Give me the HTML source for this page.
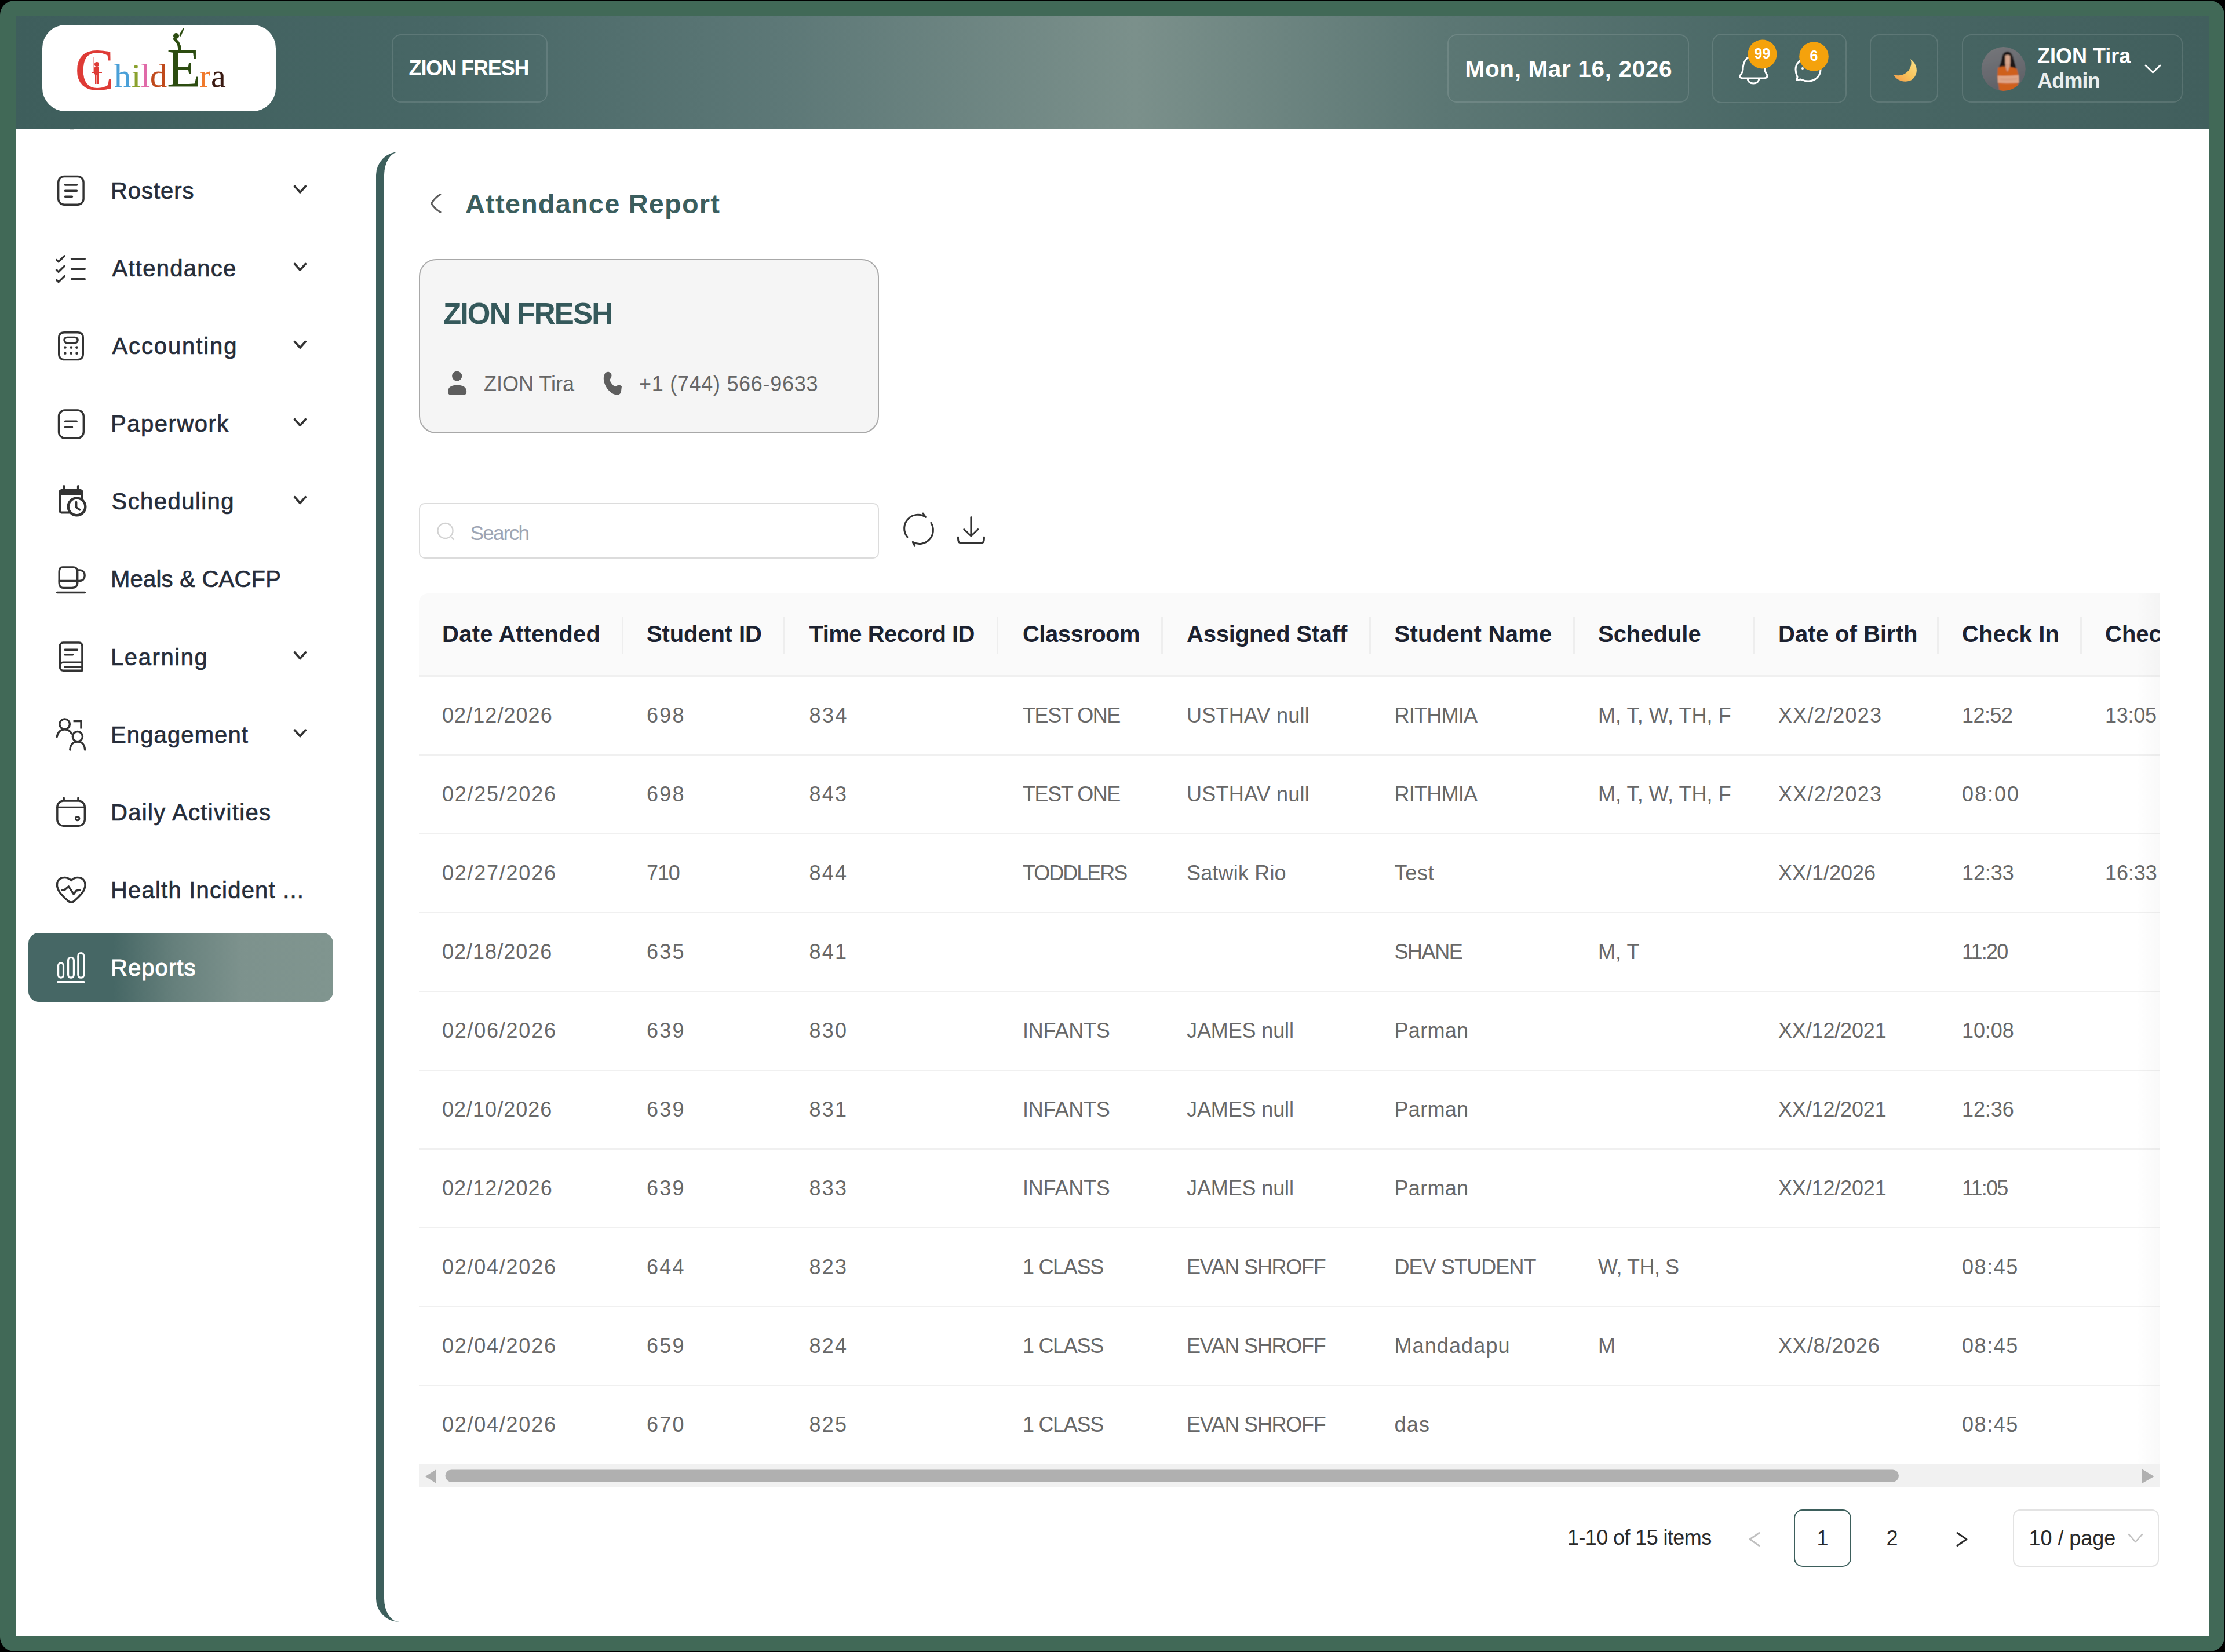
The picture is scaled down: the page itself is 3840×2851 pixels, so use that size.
<!DOCTYPE html><html><head><meta charset="utf-8"><title>Attendance Report</title><style>
html,body{margin:0;padding:0;}body{width:3840px;height:2851px;position:relative;overflow:hidden;background:#000;font-family:"Liberation Sans", sans-serif;}
div{box-sizing:border-box;}svg{position:absolute;overflow:visible;}
</style></head><body>
<div style="position:absolute;left:0px;top:1px;width:3839px;height:2849px;box-sizing:border-box;background:#416957;border-radius:25px;"></div>
<div style="position:absolute;left:28px;top:28px;width:3784px;height:2795px;box-sizing:border-box;background:#fff;"></div>
<div style="position:absolute;left:28px;top:28px;width:3784px;height:194px;box-sizing:border-box;background:linear-gradient(90deg,#3e5e5c 0%,#486766 20%,#5d7877 35%,#7b908b 51%,#5c7774 65%,#4a6866 80%,#415f5d 100%);"></div>
<div style="position:absolute;left:73px;top:43px;width:403px;height:149px;box-sizing:border-box;background:#fff;border-radius:40px;"></div>
<div style="position:absolute;left:130px;top:0;height:0;font-family:'Liberation Serif',serif;">
<div style="position:absolute;left:-1px;top:120.7px;font-size:102px;line-height:0;color:#de3b36;white-space:pre;-webkit-text-stroke:0.2px #de3b36;">C</div>
<div style="position:absolute;left:67px;top:130.9px;font-size:58px;line-height:0;color:#4aa0d8;white-space:pre;-webkit-text-stroke:0.2px #4aa0d8;">h</div>
<div style="position:absolute;left:97px;top:130.9px;font-size:58px;line-height:0;color:#8aa12e;white-space:pre;-webkit-text-stroke:0.2px #8aa12e;">i</div>
<div style="position:absolute;left:113px;top:130.9px;font-size:58px;line-height:0;color:#e06aa8;white-space:pre;-webkit-text-stroke:0.2px #e06aa8;">l</div>
<div style="position:absolute;left:129px;top:130.9px;font-size:58px;line-height:0;color:#c04a1c;white-space:pre;-webkit-text-stroke:0.2px #c04a1c;">d</div>
<div style="position:absolute;left:158px;top:117.7px;font-size:96px;line-height:0;color:#2c4c10;white-space:pre;-webkit-text-stroke:0.2px #2c4c10;">E</div>
<div style="position:absolute;left:214px;top:130.9px;font-size:58px;line-height:0;color:#f07a2c;white-space:pre;-webkit-text-stroke:0.2px #f07a2c;">r</div>
<div style="position:absolute;left:234px;top:130.9px;font-size:58px;line-height:0;color:#3a1a12;white-space:pre;-webkit-text-stroke:0.2px #3a1a12;">a</div>
</div>
<svg style="left:0;top:0" width="3840" height="240"><g fill="#de3b36"><circle cx="167" cy="111" r="4"/><rect x="163" y="115" width="8" height="14" rx="2"/><rect x="164" y="128" width="2.5" height="17"/><rect x="168" y="128" width="2.5" height="17"/><rect x="158" y="124" width="18" height="2"/></g><line x1="161" y1="98" x2="161" y2="125" stroke="#de3b36" stroke-width="0.8"/><g fill="#2c4c10"><circle cx="304" cy="62" r="5"/><path d="M301 65 Q309 69 312 79 L312 88 L308 88 L306 77 Q302 71 298 67Z"/><path d="M309 61 L316 48 L318 49 L312 63Z"/></g></svg>
<div style="position:absolute;left:676px;top:59px;width:269px;height:118px;box-sizing:border-box;border:2px solid rgba(255,255,255,0.12);border-radius:16px;"></div>
<div style="position:absolute;top:117.53px;font-size:36px;line-height:0;color:#ffffff;font-weight:700;white-space:pre;left:705.5px;letter-spacing:-1.1px;">ZION FRESH</div>
<div style="position:absolute;left:2498px;top:59px;width:417px;height:118px;box-sizing:border-box;border:2px solid rgba(255,255,255,0.12);border-radius:16px;"></div>
<div style="position:absolute;top:118.97px;font-size:40.5px;line-height:0;color:#ffffff;font-weight:700;white-space:pre;left:2528.5px;letter-spacing:0.65px;">Mon, Mar 16, 2026</div>
<div style="position:absolute;left:2955px;top:58px;width:232px;height:120px;box-sizing:border-box;border:2px solid rgba(255,255,255,0.12);border-radius:16px;"></div>
<div style="position:absolute;left:3227px;top:59px;width:118px;height:118px;box-sizing:border-box;border:2px solid rgba(255,255,255,0.12);border-radius:16px;"></div>
<div style="position:absolute;left:3386px;top:59px;width:381px;height:118px;box-sizing:border-box;border:2px solid rgba(255,255,255,0.12);border-radius:16px;"></div>
<svg style="left:0;top:0" width="3840" height="240"><g fill="none" stroke="#ffffff" stroke-width="3" stroke-linejoin="round" stroke-linecap="round"><path d="M3025 96 C3012 98 3008 110 3008 120 C3008 127 3003 128 3003 132 C3003 134 3006 135 3010 135 L3044 135 C3048 135 3050 134 3050 131 C3050 128 3046 126 3046 120 C3046 110 3040 98 3028 96"/><path d="M3016 136 C3017 142 3021 144 3026 144 C3031 144 3035 142 3036 136"/><path d="M3122 100 C3108 100 3099 109 3099 120 C3099 126 3101 130 3102 133 L3101 138 L3108 137 C3112 139 3116 140 3121 140 C3133 140 3142 131 3142 120"/></g><circle cx="3111" cy="118" r="2" fill="#fff"/><circle cx="3041.5" cy="93.5" r="25" fill="#f5a20c"/><circle cx="3130.5" cy="97.5" r="25.3" fill="#f5a20c"/></svg>
<div style="position:absolute;top:92.34px;font-size:25px;line-height:0;color:#ffffff;font-weight:700;white-space:pre;left:3041.5px;width:0;display:flex;justify-content:center;">99</div>
<div style="position:absolute;top:96.34px;font-size:25px;line-height:0;color:#ffffff;font-weight:700;white-space:pre;left:3130.5px;width:0;display:flex;justify-content:center;">6</div>
<svg style="left:0;top:0" width="3840" height="240"><defs><linearGradient id="mg" x1="1" y1="0" x2="0" y2="1"><stop offset="0" stop-color="#fbe38a"/><stop offset="0.55" stop-color="#f9c25a"/><stop offset="1" stop-color="#f59a4a"/></linearGradient></defs><path d="M3297 102 C3312 112 3311 132 3297 139 C3287 143 3274 140 3268 129 C3281 133 3293 127 3297 116 C3299 111 3299 106 3297 102Z" fill="url(#mg)"/></svg>
<svg style="left:0;top:0" width="3840" height="240"><defs><clipPath id="av"><circle cx="3457.7" cy="119" r="38"/></clipPath><linearGradient id="avbg" x1="0.3" y1="0" x2="0.6" y2="1"><stop offset="0" stop-color="#76777b"/><stop offset="1" stop-color="#5c5e65"/></linearGradient><filter id="avblur" x="-5%" y="-5%" width="110%" height="110%"><feGaussianBlur stdDeviation="0.9"/></filter></defs><g clip-path="url(#av)"><g filter="url(#avblur)"><rect x="3415" y="76" width="86" height="86" fill="url(#avbg)"/><path d="M3464 89 C3458 90 3456 94 3455 100 C3454 106 3452 111 3450 116 L3460 119 L3472 119 L3480 119 C3478 112 3476 106 3474 98 C3472 92 3469 89 3464 89Z" fill="#1d1919"/><path d="M3460.5 96 C3463 94.5 3468 94.5 3469.5 97 L3469.5 110 C3468 113 3462 113 3460.5 110Z" fill="#d6a58c"/><rect x="3461" y="110" width="8" height="13" fill="#d29c82"/><path d="M3448 117 C3452 115 3457 114.5 3461 115 L3464.5 125 L3468 115.5 C3473 116 3478 117 3481 119 L3484 133 L3481 158 L3451 158 L3447 133Z" fill="#cf601e"/><path d="M3447.5 130.5 C3458 131.5 3472 130.5 3484 129.5 L3484.5 143 C3472 144 3458 144 3448 143Z" fill="#dfa587"/><path d="M3452 136.5 C3462 137.5 3472 137 3481 136" stroke="#c48a70" stroke-width="1" fill="none"/></g></g></svg>
<div style="position:absolute;top:96.53px;font-size:36px;line-height:0;color:#ffffff;font-weight:700;white-space:pre;left:3516px;">ZION Tira</div>
<div style="position:absolute;top:139.53px;font-size:36px;line-height:0;color:#e9eeee;font-weight:700;white-space:pre;left:3516px;letter-spacing:-0.8px;">Admin</div>
<svg style="left:0;top:0" width="3840" height="240"><path d="M3703 113 L3715.5 125 L3728 113" fill="none" stroke="#fff" stroke-width="3" stroke-linecap="round" stroke-linejoin="round"/></svg>
<div style="position:absolute;left:120px;top:222px;width:8px;height:2px;box-sizing:border-box;background:#d5d8d8;"></div>
<div style="position:absolute;left:49px;top:1610px;width:526px;height:119px;box-sizing:border-box;border-radius:18px;background:linear-gradient(90deg,#466765 0%,#466765 28%,#66807c 48%,#7d928d 70%,#80958f 100%);"></div>
<div style="position:absolute;top:328.94px;font-size:40px;line-height:0;color:#262d3a;font-weight:400;white-space:pre;left:191.0px;letter-spacing:0.96px;-webkit-text-stroke:0.7px #262d3a;">Rosters</div>
<div style="position:absolute;top:463.04px;font-size:40px;line-height:0;color:#262d3a;font-weight:400;white-space:pre;left:193.5px;letter-spacing:1.27px;-webkit-text-stroke:0.7px #262d3a;">Attendance</div>
<div style="position:absolute;top:597.14px;font-size:40px;line-height:0;color:#262d3a;font-weight:400;white-space:pre;left:193.5px;letter-spacing:1.89px;-webkit-text-stroke:0.7px #262d3a;">Accounting</div>
<div style="position:absolute;top:731.24px;font-size:40px;line-height:0;color:#262d3a;font-weight:400;white-space:pre;left:191.0px;letter-spacing:1.51px;-webkit-text-stroke:0.7px #262d3a;">Paperwork</div>
<div style="position:absolute;top:865.34px;font-size:40px;line-height:0;color:#262d3a;font-weight:400;white-space:pre;left:192.5px;letter-spacing:1.46px;-webkit-text-stroke:0.7px #262d3a;">Scheduling</div>
<div style="position:absolute;top:999.44px;font-size:40px;line-height:0;color:#262d3a;font-weight:400;white-space:pre;left:191.0px;letter-spacing:0.23px;-webkit-text-stroke:0.7px #262d3a;">Meals &amp; CACFP</div>
<div style="position:absolute;top:1133.54px;font-size:40px;line-height:0;color:#262d3a;font-weight:400;white-space:pre;left:191.0px;letter-spacing:1.59px;-webkit-text-stroke:0.7px #262d3a;">Learning</div>
<div style="position:absolute;top:1267.64px;font-size:40px;line-height:0;color:#262d3a;font-weight:400;white-space:pre;left:191.0px;letter-spacing:1.12px;-webkit-text-stroke:0.7px #262d3a;">Engagement</div>
<div style="position:absolute;top:1401.74px;font-size:40px;line-height:0;color:#262d3a;font-weight:400;white-space:pre;left:191.0px;letter-spacing:1.36px;-webkit-text-stroke:0.7px #262d3a;">Daily Activities</div>
<div style="position:absolute;top:1535.84px;font-size:40px;line-height:0;color:#262d3a;font-weight:400;white-space:pre;left:191.0px;letter-spacing:1.2px;-webkit-text-stroke:0.7px #262d3a;">Health Incident ...</div>
<div style="position:absolute;top:1669.94px;font-size:40px;line-height:0;color:#ffffff;font-weight:400;white-space:pre;left:191.0px;letter-spacing:1.07px;-webkit-text-stroke:1.0px #ffffff;">Reports</div>
<svg style="left:0;top:0" width="700" height="1800"><g fill="none" stroke="#333333" stroke-width="3.4" stroke-linecap="round" stroke-linejoin="round"><path stroke-width="3.7" d="M508.6 321.4 L517.9 331.9 L527.2 321.4"/><path stroke-width="3.7" d="M508.6 455.5 L517.9 466.0 L527.2 455.5"/><path stroke-width="3.7" d="M508.6 589.6 L517.9 600.1 L527.2 589.6"/><path stroke-width="3.7" d="M508.6 723.7 L517.9 734.2 L527.2 723.7"/><path stroke-width="3.7" d="M508.6 857.8 L517.9 868.3 L527.2 857.8"/><path stroke-width="3.7" d="M508.6 1126.0 L517.9 1136.5 L527.2 1126.0"/><path stroke-width="3.7" d="M508.6 1260.1 L517.9 1270.6 L527.2 1260.1"/><rect x="100.7" y="304.5" width="43.4" height="48.7" rx="10"/><path d="M112.4 319 H132.5 M112.4 329.2 H132.5 M112.4 339.2 H124.5"/><path d="M97.5 448.5 L101 451.8 L111.2 441.8"/><path d="M97.5 465.9 L101 469.2 L111.2 459.2"/><path d="M97.5 483.3 L101 486.6 L111.2 476.6"/><path d="M123.5 446.8 H146.3 M123.5 464.2 H146.3 M123.5 481.7 H146.3"/><path d="M111 573.7 H134 C140 573.7 143.3 577 143.3 583 V611 C143.3 617 140 620.6 134 620.6 H111 C105 620.6 101.7 617 101.7 611 V583 C101.7 577 105 573.7 111 573.7Z"/><rect x="111" y="582.4" width="23.1" height="9.2" rx="4.6"/></g><g fill="#333333"><circle cx="112.4" cy="599.6" r="2.3"/><circle cx="112.4" cy="609.7" r="2.3"/><circle cx="122.8" cy="599.6" r="2.3"/><circle cx="122.8" cy="609.7" r="2.3"/><circle cx="132.5" cy="599.6" r="2.3"/><circle cx="132.5" cy="609.7" r="2.3"/></g><g fill="none" stroke="#333333" stroke-width="3.4" stroke-linecap="round" stroke-linejoin="round"><rect x="101.5" y="707.9" width="42.8" height="48.2" rx="10.5"/><path d="M112.6 727.3 H132.2 M112.6 737.2 H124.5"/></g><path fill="#333333" d="M107 843.9 H138 C141.5 843.9 143.8 846.2 143.8 849.7 V866 L139.8 864 V854.5 H105 V882.5 H118 L120.5 886.5 H107 C103.5 886.5 101 884 101 880.5 V849.9 C101 846.4 103.5 843.9 107 843.9Z"/><g fill="none" stroke="#333333" stroke-linecap="round" stroke-linejoin="round"><path stroke-width="4" d="M110.4 839 V845 M134.9 839 V845"/><circle cx="132.5" cy="874.4" r="14.8" stroke-width="4.4" fill="#fff"/><path stroke-width="3.6" d="M131.6 866.5 V875.5 L137.5 879.8"/></g><g fill="none" stroke="#333333" stroke-width="3.4" stroke-linecap="round" stroke-linejoin="round"><path d="M108 978.9 H126 C131.5 978.9 133.7 981.5 133.7 987 V1006 C133.7 1011.5 130 1014.5 124 1014.5 H110 C104 1014.5 102.2 1011.5 102.2 1006 V987 C102.2 981.5 104 978.9 108 978.9Z"/><path d="M102.2 1002.4 H133.7 M133.7 984 H137 C143 984 146.2 988 146.2 993 C146.2 998.5 143 1002.4 137 1002.4 H133.7 M98.3 1022.5 H146.7"/><path d="M109 1109 H136.5 C140 1109 141.9 1111.5 141.9 1115 V1157.2 H109 C105.5 1157.2 103.4 1154.5 103.4 1150 V1115 C103.4 1111.5 105.5 1109 109 1109Z"/><path d="M112 1121.3 H133.5 M112 1129.8 H125.5 M103.6 1149 C103.6 1145.5 105.5 1143.1 109.5 1143.1 H141.9 M112 1151.1 H141"/><circle cx="111.6" cy="1249.8" r="8.8"/><path d="M98.3 1271.6 C99.5 1263.5 104.5 1258.8 111.6 1258.8 C116.5 1258.8 121 1261.5 123.3 1266"/><circle cx="133.9" cy="1271.1" r="8.6"/><path d="M120.8 1294 C121.5 1285 126.5 1280 133.9 1280 C141.3 1280 146 1285 146.6 1294"/><path stroke-linecap="butt" stroke-linejoin="miter" d="M126.6 1244.5 H140 V1257.5"/><rect x="98.8" y="1382.1" width="47.5" height="43.1" rx="10.5"/><path d="M98.8 1393.4 H146.3 M110.2 1377 V1381 M134.9 1377 V1381"/><circle cx="133.7" cy="1412.6" r="3.2" stroke-width="3"/><path d="M122.8 1519.5 C118 1514.5 112 1513.8 107 1515 C100.5 1516.8 97.8 1523 98.7 1530 C99.8 1537.5 105 1543 110.5 1548.5 L118 1555.2 C120.5 1557.6 125.2 1557.6 127.7 1555.2 L135 1548.5 C140.5 1543 145.8 1537.5 146.8 1530 C147.6 1523 145 1516.8 138.5 1515 C133.5 1513.8 127.5 1514.5 122.8 1519.5Z"/><path d="M107.3 1536.4 C110.5 1536.4 112.5 1535.8 114 1533.5 L118.4 1529.9 L127.1 1543 L131.5 1537.2 C133 1536.4 135 1536.4 137.8 1536.4"/></g><g fill="none" stroke="#ffffff" stroke-width="3.2" stroke-linecap="round" stroke-linejoin="round"><rect x="100.6" y="1661.9" width="8.9" height="25.3" rx="4.45"/><rect x="117.6" y="1652.4" width="9.8" height="34.8" rx="4.9"/><rect x="134.8" y="1644.6" width="9.9" height="42.6" rx="4.95"/><path d="M99.5 1694.6 H145"/></g></svg>
<div style="position:absolute;left:649px;top:262px;width:500px;height:2537px;border-left:14px solid #3d5f5c;border-radius:40px 0 0 40px;"></div>
<svg style="left:0;top:0" width="1800" height="1000"><path d="M759.8 335.6 Q750 341.5 744.6 351.3 Q750.5 360.5 760 366.2" fill="none" stroke="#5e5e5e" stroke-width="3.1" stroke-linecap="round" stroke-linejoin="round"/></svg>
<div style="position:absolute;top:352.41px;font-size:47px;line-height:0;color:#3b5e5e;font-weight:700;white-space:pre;left:803px;letter-spacing:1.15px;">Attendance Report</div>
<div style="position:absolute;left:723px;top:446.5px;width:794px;height:301.0px;box-sizing:border-box;background:#f5f5f5;border:2px solid #a8a8a8;border-radius:30px;"></div>
<div style="position:absolute;top:541.83px;font-size:51px;line-height:0;color:#35595b;font-weight:700;white-space:pre;left:765px;letter-spacing:-1.75px;">ZION FRESH</div>
<svg style="left:0;top:0" width="1800" height="1000"><g fill="#5e5e5e"><circle cx="788.7" cy="649" r="8.6"/><path d="M773 676 C773 668 780 664.5 789 664.5 C798 664.5 805.2 668 805.2 676 C805.2 680.5 802 682 798 682 H780 C776 682 773 680.5 773 676Z"/><path d="M1043.5 645.5 C1044.8 642.5 1048.5 641.2 1051.5 642.2 L1053.5 643.5 C1055.5 645 1056 648 1055 650.5 L1052.2 656 C1054 660.5 1057.5 665 1061.5 667.5 L1066 665 C1068.5 664 1071.5 665 1073 667 L1071.8 676.5 C1071 680 1067 682.5 1063 681.5 C1051 678.5 1042 665 1041.8 653 C1041.8 650.5 1042.5 648 1043.5 645.5Z"/></g></svg>
<div style="position:absolute;top:662.93px;font-size:36px;line-height:0;color:#666666;font-weight:400;white-space:pre;left:835px;">ZION Tira</div>
<div style="position:absolute;top:662.93px;font-size:36px;line-height:0;color:#666666;font-weight:400;white-space:pre;left:1103px;letter-spacing:0.7px;">+1 (744) 566-9633</div>
<div style="position:absolute;left:723px;top:868px;width:794px;height:96px;box-sizing:border-box;background:#fff;border:2px solid #dcdcdc;border-radius:10px;"></div>
<svg style="left:0;top:0" width="1800" height="1000"><g fill="none" stroke="#d2d2d2" stroke-width="2.3" stroke-linecap="round"><circle cx="768.5" cy="916" r="13"/><path d="M778 926 L783 931"/></g><g fill="none" stroke="#333" stroke-width="3" stroke-linecap="round" stroke-linejoin="round"><path d="M1566 926.8 A23.6 23.6 0 0 1 1597.5 892.3 L1593 886"/><path d="M1606.8 902.3 A23.6 23.6 0 0 1 1575.2 935.4 L1578.8 942.2"/><path d="M1675.9 892.5 V924.5 M1663.8 913.5 L1675.9 925 L1687.8 913.5 M1653.5 927 V930.5 C1653.5 935 1656 937.2 1660 937.2 H1692 C1696 937.2 1698.4 935 1698.4 930.5 V927"/></g></svg>
<div style="position:absolute;top:919.87px;font-size:35px;line-height:0;color:#9ea5b3;font-weight:400;white-space:pre;left:811.5px;letter-spacing:-1.7px;">Search</div>
<div style="position:absolute;left:723px;top:1024px;width:3004px;height:1542px;overflow:hidden;">
<div style="position:absolute;left:0px;top:0px;width:3044px;height:143px;background:#fafafa;border-top-left-radius:16px;"></div>
<div style="position:absolute;left:0px;top:141px;width:3004px;height:3px;background:#f0f0f0;"></div>
<div style="position:absolute;left:349.5px;top:40px;width:3.5px;height:64px;background:#eeeeee;"></div>
<div style="position:absolute;left:628.5px;top:40px;width:3.5px;height:64px;background:#eeeeee;"></div>
<div style="position:absolute;left:996.5px;top:40px;width:3.5px;height:64px;background:#eeeeee;"></div>
<div style="position:absolute;left:1280.5px;top:40px;width:3.5px;height:64px;background:#eeeeee;"></div>
<div style="position:absolute;left:1639.5px;top:40px;width:3.5px;height:64px;background:#eeeeee;"></div>
<div style="position:absolute;left:1991.5px;top:40px;width:3.5px;height:64px;background:#eeeeee;"></div>
<div style="position:absolute;left:2301.5px;top:40px;width:3.5px;height:64px;background:#eeeeee;"></div>
<div style="position:absolute;left:2619.5px;top:40px;width:3.5px;height:64px;background:#eeeeee;"></div>
<div style="position:absolute;left:2866.5px;top:40px;width:3.5px;height:64px;background:#eeeeee;"></div>
<div style="position:absolute;left:40px;top:69.74px;font-size:40px;line-height:0;color:#1c2230;font-weight:700;white-space:pre;letter-spacing:0.28px;">Date Attended</div>
<div style="position:absolute;left:393px;top:69.74px;font-size:40px;line-height:0;color:#1c2230;font-weight:700;white-space:pre;letter-spacing:-0.12px;">Student ID</div>
<div style="position:absolute;left:673.5px;top:69.74px;font-size:40px;line-height:0;color:#1c2230;font-weight:700;white-space:pre;letter-spacing:-0.52px;">Time Record ID</div>
<div style="position:absolute;left:1042px;top:69.74px;font-size:40px;line-height:0;color:#1c2230;font-weight:700;white-space:pre;letter-spacing:-0.52px;">Classroom</div>
<div style="position:absolute;left:1325px;top:69.74px;font-size:40px;line-height:0;color:#1c2230;font-weight:700;white-space:pre;letter-spacing:-0.21px;">Assigned Staff</div>
<div style="position:absolute;left:1683.5px;top:69.74px;font-size:40px;line-height:0;color:#1c2230;font-weight:700;white-space:pre;letter-spacing:0.26px;">Student Name</div>
<div style="position:absolute;left:2035px;top:69.74px;font-size:40px;line-height:0;color:#1c2230;font-weight:700;white-space:pre;letter-spacing:-0.03px;">Schedule</div>
<div style="position:absolute;left:2346px;top:69.74px;font-size:40px;line-height:0;color:#1c2230;font-weight:700;white-space:pre;letter-spacing:0.04px;">Date of Birth</div>
<div style="position:absolute;left:2663px;top:69.74px;font-size:40px;line-height:0;color:#1c2230;font-weight:700;white-space:pre;letter-spacing:0.19px;">Check In</div>
<div style="position:absolute;left:2910px;top:69.74px;font-size:40px;line-height:0;color:#1c2230;font-weight:700;white-space:pre;">Check Out</div>
<div style="position:absolute;left:40px;top:210.93px;font-size:36px;line-height:0;color:#686868;font-weight:400;white-space:pre;letter-spacing:1.06px;">02/12/2026</div>
<div style="position:absolute;left:393px;top:210.93px;font-size:36px;line-height:0;color:#686868;font-weight:400;white-space:pre;letter-spacing:2.28px;">698</div>
<div style="position:absolute;left:673.5px;top:210.93px;font-size:36px;line-height:0;color:#686868;font-weight:400;white-space:pre;letter-spacing:2.48px;">834</div>
<div style="position:absolute;left:1042px;top:210.93px;font-size:36px;line-height:0;color:#686868;font-weight:400;white-space:pre;letter-spacing:-1.43px;">TEST ONE</div>
<div style="position:absolute;left:1325px;top:210.93px;font-size:36px;line-height:0;color:#686868;font-weight:400;white-space:pre;letter-spacing:0.24px;">USTHAV null</div>
<div style="position:absolute;left:1683.5px;top:210.93px;font-size:36px;line-height:0;color:#686868;font-weight:400;white-space:pre;letter-spacing:-0.75px;">RITHMIA</div>
<div style="position:absolute;left:2035px;top:210.93px;font-size:36px;line-height:0;color:#686868;font-weight:400;white-space:pre;letter-spacing:0.08px;">M, T, W, TH, F</div>
<div style="position:absolute;left:2346px;top:210.93px;font-size:36px;line-height:0;color:#686868;font-weight:400;white-space:pre;letter-spacing:1.24px;">XX/2/2023</div>
<div style="position:absolute;left:2663px;top:210.93px;font-size:36px;line-height:0;color:#686868;font-weight:400;white-space:pre;letter-spacing:-0.52px;">12:52</div>
<div style="position:absolute;left:2910px;top:210.93px;font-size:36px;line-height:0;color:#686868;font-weight:400;white-space:pre;letter-spacing:-0.27px;">13:05</div>
<div style="position:absolute;left:0px;top:278px;width:3004px;height:2px;background:#f0f0f0;"></div>
<div style="position:absolute;left:40px;top:346.93px;font-size:36px;line-height:0;color:#686868;font-weight:400;white-space:pre;letter-spacing:1.75px;">02/25/2026</div>
<div style="position:absolute;left:393px;top:346.93px;font-size:36px;line-height:0;color:#686868;font-weight:400;white-space:pre;letter-spacing:2.28px;">698</div>
<div style="position:absolute;left:673.5px;top:346.93px;font-size:36px;line-height:0;color:#686868;font-weight:400;white-space:pre;letter-spacing:2.27px;">843</div>
<div style="position:absolute;left:1042px;top:346.93px;font-size:36px;line-height:0;color:#686868;font-weight:400;white-space:pre;letter-spacing:-1.43px;">TEST ONE</div>
<div style="position:absolute;left:1325px;top:346.93px;font-size:36px;line-height:0;color:#686868;font-weight:400;white-space:pre;letter-spacing:0.24px;">USTHAV null</div>
<div style="position:absolute;left:1683.5px;top:346.93px;font-size:36px;line-height:0;color:#686868;font-weight:400;white-space:pre;letter-spacing:-0.75px;">RITHMIA</div>
<div style="position:absolute;left:2035px;top:346.93px;font-size:36px;line-height:0;color:#686868;font-weight:400;white-space:pre;letter-spacing:0.08px;">M, T, W, TH, F</div>
<div style="position:absolute;left:2346px;top:346.93px;font-size:36px;line-height:0;color:#686868;font-weight:400;white-space:pre;letter-spacing:1.24px;">XX/2/2023</div>
<div style="position:absolute;left:2663px;top:346.93px;font-size:36px;line-height:0;color:#686868;font-weight:400;white-space:pre;letter-spacing:1.98px;">08:00</div>
<div style="position:absolute;left:0px;top:414px;width:3004px;height:2px;background:#f0f0f0;"></div>
<div style="position:absolute;left:40px;top:482.93px;font-size:36px;line-height:0;color:#686868;font-weight:400;white-space:pre;letter-spacing:1.75px;">02/27/2026</div>
<div style="position:absolute;left:393px;top:482.93px;font-size:36px;line-height:0;color:#686868;font-weight:400;white-space:pre;letter-spacing:-1.09px;">710</div>
<div style="position:absolute;left:673.5px;top:482.93px;font-size:36px;line-height:0;color:#686868;font-weight:400;white-space:pre;letter-spacing:2.27px;">844</div>
<div style="position:absolute;left:1042px;top:482.93px;font-size:36px;line-height:0;color:#686868;font-weight:400;white-space:pre;letter-spacing:-2.0px;">TODDLERS</div>
<div style="position:absolute;left:1325px;top:482.93px;font-size:36px;line-height:0;color:#686868;font-weight:400;white-space:pre;letter-spacing:0.17px;">Satwik Rio</div>
<div style="position:absolute;left:1683.5px;top:482.93px;font-size:36px;line-height:0;color:#686868;font-weight:400;white-space:pre;letter-spacing:0.73px;">Test</div>
<div style="position:absolute;left:2346px;top:482.93px;font-size:36px;line-height:0;color:#686868;font-weight:400;white-space:pre;">XX/1/2026</div>
<div style="position:absolute;left:2663px;top:482.93px;font-size:36px;line-height:0;color:#686868;font-weight:400;white-space:pre;letter-spacing:-0.11px;">12:33</div>
<div style="position:absolute;left:2910px;top:482.93px;font-size:36px;line-height:0;color:#686868;font-weight:400;white-space:pre;letter-spacing:-0.11px;">16:33</div>
<div style="position:absolute;left:0px;top:550px;width:3004px;height:2px;background:#f0f0f0;"></div>
<div style="position:absolute;left:40px;top:618.93px;font-size:36px;line-height:0;color:#686868;font-weight:400;white-space:pre;letter-spacing:1.01px;">02/18/2026</div>
<div style="position:absolute;left:393px;top:618.93px;font-size:36px;line-height:0;color:#686868;font-weight:400;white-space:pre;letter-spacing:2.27px;">635</div>
<div style="position:absolute;left:673.5px;top:618.93px;font-size:36px;line-height:0;color:#686868;font-weight:400;white-space:pre;letter-spacing:2.27px;">841</div>
<div style="position:absolute;left:1683.5px;top:618.93px;font-size:36px;line-height:0;color:#686868;font-weight:400;white-space:pre;letter-spacing:-1.45px;">SHANE</div>
<div style="position:absolute;left:2035px;top:618.93px;font-size:36px;line-height:0;color:#686868;font-weight:400;white-space:pre;letter-spacing:0.05px;">M, T</div>
<div style="position:absolute;left:2663px;top:618.93px;font-size:36px;line-height:0;color:#686868;font-weight:400;white-space:pre;letter-spacing:-1.79px;">11:20</div>
<div style="position:absolute;left:0px;top:686px;width:3004px;height:2px;background:#f0f0f0;"></div>
<div style="position:absolute;left:40px;top:754.93px;font-size:36px;line-height:0;color:#686868;font-weight:400;white-space:pre;letter-spacing:1.75px;">02/06/2026</div>
<div style="position:absolute;left:393px;top:754.93px;font-size:36px;line-height:0;color:#686868;font-weight:400;white-space:pre;letter-spacing:2.27px;">639</div>
<div style="position:absolute;left:673.5px;top:754.93px;font-size:36px;line-height:0;color:#686868;font-weight:400;white-space:pre;letter-spacing:2.27px;">830</div>
<div style="position:absolute;left:1042px;top:754.93px;font-size:36px;line-height:0;color:#686868;font-weight:400;white-space:pre;letter-spacing:-0.2px;">INFANTS</div>
<div style="position:absolute;left:1325px;top:754.93px;font-size:36px;line-height:0;color:#686868;font-weight:400;white-space:pre;letter-spacing:-0.12px;">JAMES null</div>
<div style="position:absolute;left:1683.5px;top:754.93px;font-size:36px;line-height:0;color:#686868;font-weight:400;white-space:pre;letter-spacing:0.31px;">Parman</div>
<div style="position:absolute;left:2346px;top:754.93px;font-size:36px;line-height:0;color:#686868;font-weight:400;white-space:pre;letter-spacing:-0.16px;">XX/12/2021</div>
<div style="position:absolute;left:2663px;top:754.93px;font-size:36px;line-height:0;color:#686868;font-weight:400;white-space:pre;letter-spacing:-0.11px;">10:08</div>
<div style="position:absolute;left:0px;top:822px;width:3004px;height:2px;background:#f0f0f0;"></div>
<div style="position:absolute;left:40px;top:890.93px;font-size:36px;line-height:0;color:#686868;font-weight:400;white-space:pre;letter-spacing:1.01px;">02/10/2026</div>
<div style="position:absolute;left:393px;top:890.93px;font-size:36px;line-height:0;color:#686868;font-weight:400;white-space:pre;letter-spacing:2.27px;">639</div>
<div style="position:absolute;left:673.5px;top:890.93px;font-size:36px;line-height:0;color:#686868;font-weight:400;white-space:pre;letter-spacing:2.27px;">831</div>
<div style="position:absolute;left:1042px;top:890.93px;font-size:36px;line-height:0;color:#686868;font-weight:400;white-space:pre;letter-spacing:-0.2px;">INFANTS</div>
<div style="position:absolute;left:1325px;top:890.93px;font-size:36px;line-height:0;color:#686868;font-weight:400;white-space:pre;letter-spacing:-0.12px;">JAMES null</div>
<div style="position:absolute;left:1683.5px;top:890.93px;font-size:36px;line-height:0;color:#686868;font-weight:400;white-space:pre;letter-spacing:0.31px;">Parman</div>
<div style="position:absolute;left:2346px;top:890.93px;font-size:36px;line-height:0;color:#686868;font-weight:400;white-space:pre;letter-spacing:-0.16px;">XX/12/2021</div>
<div style="position:absolute;left:2663px;top:890.93px;font-size:36px;line-height:0;color:#686868;font-weight:400;white-space:pre;letter-spacing:-0.11px;">12:36</div>
<div style="position:absolute;left:0px;top:958px;width:3004px;height:2px;background:#f0f0f0;"></div>
<div style="position:absolute;left:40px;top:1026.93px;font-size:36px;line-height:0;color:#686868;font-weight:400;white-space:pre;letter-spacing:1.06px;">02/12/2026</div>
<div style="position:absolute;left:393px;top:1026.93px;font-size:36px;line-height:0;color:#686868;font-weight:400;white-space:pre;letter-spacing:2.27px;">639</div>
<div style="position:absolute;left:673.5px;top:1026.93px;font-size:36px;line-height:0;color:#686868;font-weight:400;white-space:pre;letter-spacing:2.27px;">833</div>
<div style="position:absolute;left:1042px;top:1026.93px;font-size:36px;line-height:0;color:#686868;font-weight:400;white-space:pre;letter-spacing:-0.2px;">INFANTS</div>
<div style="position:absolute;left:1325px;top:1026.93px;font-size:36px;line-height:0;color:#686868;font-weight:400;white-space:pre;letter-spacing:-0.12px;">JAMES null</div>
<div style="position:absolute;left:1683.5px;top:1026.93px;font-size:36px;line-height:0;color:#686868;font-weight:400;white-space:pre;letter-spacing:0.31px;">Parman</div>
<div style="position:absolute;left:2346px;top:1026.93px;font-size:36px;line-height:0;color:#686868;font-weight:400;white-space:pre;letter-spacing:-0.16px;">XX/12/2021</div>
<div style="position:absolute;left:2663px;top:1026.93px;font-size:36px;line-height:0;color:#686868;font-weight:400;white-space:pre;letter-spacing:-1.79px;">11:05</div>
<div style="position:absolute;left:0px;top:1094px;width:3004px;height:2px;background:#f0f0f0;"></div>
<div style="position:absolute;left:40px;top:1162.93px;font-size:36px;line-height:0;color:#686868;font-weight:400;white-space:pre;letter-spacing:1.75px;">02/04/2026</div>
<div style="position:absolute;left:393px;top:1162.93px;font-size:36px;line-height:0;color:#686868;font-weight:400;white-space:pre;letter-spacing:2.27px;">644</div>
<div style="position:absolute;left:673.5px;top:1162.93px;font-size:36px;line-height:0;color:#686868;font-weight:400;white-space:pre;letter-spacing:2.27px;">823</div>
<div style="position:absolute;left:1042px;top:1162.93px;font-size:36px;line-height:0;color:#686868;font-weight:400;white-space:pre;letter-spacing:-1.31px;">1 CLASS</div>
<div style="position:absolute;left:1325px;top:1162.93px;font-size:36px;line-height:0;color:#686868;font-weight:400;white-space:pre;letter-spacing:-1.25px;">EVAN SHROFF</div>
<div style="position:absolute;left:1683.5px;top:1162.93px;font-size:36px;line-height:0;color:#686868;font-weight:400;white-space:pre;letter-spacing:-0.9px;">DEV STUDENT</div>
<div style="position:absolute;left:2035px;top:1162.93px;font-size:36px;line-height:0;color:#686868;font-weight:400;white-space:pre;letter-spacing:-0.47px;">W, TH, S</div>
<div style="position:absolute;left:2663px;top:1162.93px;font-size:36px;line-height:0;color:#686868;font-weight:400;white-space:pre;letter-spacing:1.57px;">08:45</div>
<div style="position:absolute;left:0px;top:1230px;width:3004px;height:2px;background:#f0f0f0;"></div>
<div style="position:absolute;left:40px;top:1298.93px;font-size:36px;line-height:0;color:#686868;font-weight:400;white-space:pre;letter-spacing:1.75px;">02/04/2026</div>
<div style="position:absolute;left:393px;top:1298.93px;font-size:36px;line-height:0;color:#686868;font-weight:400;white-space:pre;letter-spacing:2.27px;">659</div>
<div style="position:absolute;left:673.5px;top:1298.93px;font-size:36px;line-height:0;color:#686868;font-weight:400;white-space:pre;letter-spacing:2.27px;">824</div>
<div style="position:absolute;left:1042px;top:1298.93px;font-size:36px;line-height:0;color:#686868;font-weight:400;white-space:pre;letter-spacing:-1.31px;">1 CLASS</div>
<div style="position:absolute;left:1325px;top:1298.93px;font-size:36px;line-height:0;color:#686868;font-weight:400;white-space:pre;letter-spacing:-1.25px;">EVAN SHROFF</div>
<div style="position:absolute;left:1683.5px;top:1298.93px;font-size:36px;line-height:0;color:#686868;font-weight:400;white-space:pre;letter-spacing:1.11px;">Mandadapu</div>
<div style="position:absolute;left:2035px;top:1298.93px;font-size:36px;line-height:0;color:#686868;font-weight:400;white-space:pre;">M</div>
<div style="position:absolute;left:2346px;top:1298.93px;font-size:36px;line-height:0;color:#686868;font-weight:400;white-space:pre;letter-spacing:0.84px;">XX/8/2026</div>
<div style="position:absolute;left:2663px;top:1298.93px;font-size:36px;line-height:0;color:#686868;font-weight:400;white-space:pre;letter-spacing:1.57px;">08:45</div>
<div style="position:absolute;left:0px;top:1366px;width:3004px;height:2px;background:#f0f0f0;"></div>
<div style="position:absolute;left:40px;top:1434.93px;font-size:36px;line-height:0;color:#686868;font-weight:400;white-space:pre;letter-spacing:1.75px;">02/04/2026</div>
<div style="position:absolute;left:393px;top:1434.93px;font-size:36px;line-height:0;color:#686868;font-weight:400;white-space:pre;letter-spacing:2.27px;">670</div>
<div style="position:absolute;left:673.5px;top:1434.93px;font-size:36px;line-height:0;color:#686868;font-weight:400;white-space:pre;letter-spacing:2.27px;">825</div>
<div style="position:absolute;left:1042px;top:1434.93px;font-size:36px;line-height:0;color:#686868;font-weight:400;white-space:pre;letter-spacing:-1.31px;">1 CLASS</div>
<div style="position:absolute;left:1325px;top:1434.93px;font-size:36px;line-height:0;color:#686868;font-weight:400;white-space:pre;letter-spacing:-1.25px;">EVAN SHROFF</div>
<div style="position:absolute;left:1683.5px;top:1434.93px;font-size:36px;line-height:0;color:#686868;font-weight:400;white-space:pre;letter-spacing:1.23px;">das</div>
<div style="position:absolute;left:2663px;top:1434.93px;font-size:36px;line-height:0;color:#686868;font-weight:400;white-space:pre;letter-spacing:1.57px;">08:45</div>
<div style="position:absolute;left:2964px;top:0px;width:40px;height:1502px;background:linear-gradient(90deg,rgba(0,0,0,0),rgba(0,0,0,0.025));"></div>
<div style="position:absolute;left:0px;top:1502px;width:3004px;height:40px;background:#f1f1f1;"></div>
</div>
<svg style="left:0;top:0" width="3840" height="2851"><path d="M734 2548 L752 2536.5 L752 2559.5Z" fill="#b0b0b0"/><path d="M3717.6 2548 L3697 2535.5 L3697 2560Z" fill="#b0b0b0"/><rect x="768.5" y="2536.5" width="2508.5" height="21" rx="10.5" fill="#b0b0b0"/></svg>
<div style="position:absolute;top:2653.93px;font-size:36px;line-height:0;color:#2a2a2a;font-weight:400;white-space:pre;left:2705px;letter-spacing:-0.6px;">1-10 of 15 items</div>
<svg style="left:0;top:0" width="3840" height="2851"><g fill="none" stroke-width="3" stroke-linecap="round" stroke-linejoin="round"><path d="M3036 2645.5 L3020 2656.5 L3036 2667.5" stroke="#c0c0c0"/><path d="M3378 2645.5 L3394 2656.5 L3378 2667.5" stroke="#2a2a2a"/><path d="M3674 2648 L3685.5 2661 L3697 2648" stroke="#c0c0c0" stroke-width="2.5"/></g></svg>
<div style="position:absolute;left:3096px;top:2605px;width:99px;height:99px;box-sizing:border-box;border:2px solid #3d5f5c;border-radius:15px;"></div>
<div style="position:absolute;top:2654.53px;font-size:36px;line-height:0;color:#2a2a2a;font-weight:400;white-space:pre;left:3145.5px;width:0;display:flex;justify-content:center;">1</div>
<div style="position:absolute;top:2654.53px;font-size:36px;line-height:0;color:#2a2a2a;font-weight:400;white-space:pre;left:3265.5px;width:0;display:flex;justify-content:center;">2</div>
<div style="position:absolute;left:3474px;top:2605px;width:252px;height:99px;box-sizing:border-box;border:2px solid #e3e3e3;border-radius:12px;"></div>
<div style="position:absolute;top:2654.53px;font-size:36px;line-height:0;color:#2a2a2a;font-weight:400;white-space:pre;left:3501.5px;letter-spacing:-0.05px;">10 / page</div>
</body></html>
